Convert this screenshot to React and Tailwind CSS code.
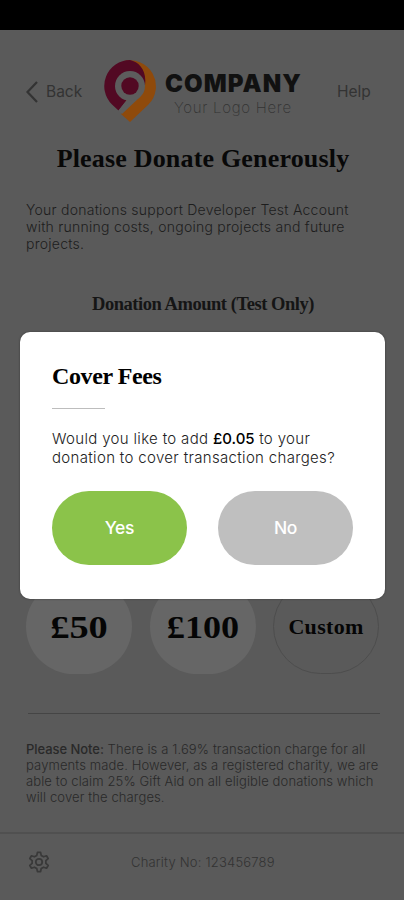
const AMOUNTS = [
    { label: '£50', style: 'bg-[#666666] text-[32px]', stretch: 'scale-x-[1.2]' },
    { label: '£100', style: 'bg-[#666666] text-[32px]', stretch: 'scale-x-[1.13]' },
    { label: 'Custom', style: 'border border-[#4d4d4d] text-[22px] tracking-[0.3px]', stretch: '' },
];

function Logo() {
    return (
        <div className="flex w-[198px] gap-[9px]">
            <svg width="52" height="62" viewBox="0 0 52 62" className="shrink-0">
                <path d="M20 1A26 26 0 0 1 44.5 44.5L26 62L17 54L26 30Z" fill="#8f4a0b" />
                <path d="M8 44.5A26 26 0 0 1 26 0C35 2 43 10 41 25L26 26L22 41L14.5 50.5Z" fill="#520923" />
                <path d="M14.5 50.5L18 54L36.5 36.5L26 36Z" fill="#5d5d5d" />
                <circle cx="26" cy="26" r="15" fill="#5d5d5d" />
                <circle cx="26" cy="26" r="8.7" fill="#520923" />
            </svg>
            <div className="flex flex-col pt-[10px]">
                <span className="text-[24px] leading-[28px] font-black tracking-[1.1px] text-[#111111]">COMPANY</span>
                <span className="pl-[9px] text-[15px] leading-[20px] font-extralight tracking-[0.7px] whitespace-nowrap text-[#333333]">
                    Your Logo Here
                </span>
            </div>
        </div>
    );
}

function BackIcon() {
    return (
        <svg width="12" height="22" viewBox="0 0 12 22" fill="none" stroke="#333333" strokeWidth="2.2" className="shrink-0">
            <path d="M11 1L1.5 11L11 21" />
        </svg>
    );
}

function GearIcon() {
    return (
        <svg width="22" height="22" viewBox="0 0 24 24" fill="none" stroke="#393939" strokeWidth="1.9" strokeLinejoin="round">
            <path d="M9.6 4.8 10.3 1.5H13.7L14.4 4.8 17 6.3 20.2 5.2 22 8.2 19.5 10.5V13.5L22 15.8 20.2 18.8 17 17.7 14.4 19.2 13.7 22.5H10.3L9.6 19.2 7 17.7 3.8 18.8 2 15.8 4.5 13.5V10.5L2 8.2 3.8 5.2 7 6.3Z" />
            <circle cx="12" cy="12" r="3.5" />
        </svg>
    );
}

function CoverFeesDialog() {
    return (
        <div className="absolute top-[332px] left-[20px] h-[267px] w-[365px] rounded-[10px] bg-white px-8 pt-[29px] shadow-[0_0_2px_#333333]">
            <h2 className="font-['Liberation_Serif',serif] text-[24px] leading-[30px] font-bold tracking-[-0.4px] whitespace-nowrap text-black">
                Cover Fees
            </h2>
            <div className="mt-[17px] h-px w-[53px] bg-[#bdbdbd]" />
            <p className="mt-[20px] text-[15px] leading-[19px] font-light tracking-[0.33px] whitespace-nowrap text-[#222222]">
                Would you like to add <span className="font-medium tracking-normal text-black">£0.05</span> to your
                <br />
                donation to cover transaction charges?
            </p>
            <div className="mt-[24px] flex gap-[31px]">
                <button className="h-[74px] w-[135px] rounded-full bg-[#8bc34a] text-[17.5px] font-medium tracking-[-0.3px] text-white">Yes</button>
                <button className="h-[74px] w-[135px] rounded-full bg-[#bfbfbf] text-[17.5px] font-medium tracking-[-0.3px] text-white">No</button>
            </div>
        </div>
    );
}

export default function App() {
    return (
        <div className="relative flex h-[900px] w-[404px] flex-col overflow-hidden bg-[#5a5a5a] font-['Inter',sans-serif]">
            <div className="h-[30px] shrink-0 bg-black" />

            <header className="flex h-[114px] shrink-0 items-start pt-[30px] pl-[26px]">
                <div className="flex w-[78px] items-center gap-2 pt-[18px] text-[#333333]">
                    <BackIcon />
                    <span className="pt-px text-[15.5px] leading-[26px]">Back</span>
                </div>
                <Logo />
                <span className="pt-[19px] pl-[35px] text-[15.5px] leading-[26px] text-[#333333]">Help</span>
            </header>

            <main className="flex h-[688px] shrink-0 flex-col px-[26px]">
                <h1 className="pl-[2px] text-center font-['Liberation_Serif',serif] text-[26px] leading-[30px] font-bold tracking-[0.18px] whitespace-nowrap text-[#080808]">
                    Please Donate Generously
                </h1>
                <p className="mt-[27px] text-[14px] leading-[17px] font-light tracking-[0.25px] whitespace-nowrap text-[#1d1d1d]">
                    Your donations support Developer Test Account
                    <br />
                    with running costs, ongoing projects and future
                    <br />
                    projects.
                </p>
                <h3 className="mt-[40px] pl-[2px] text-center font-['Liberation_Serif',serif] text-[18.5px] leading-[24px] font-bold tracking-[-0.45px] whitespace-nowrap text-[#151515]">
                    Donation Amount (Test Only)
                </h3>

                <div className="mt-[263px] flex gap-[17.5px]">
                    {AMOUNTS.map(({ label, style, stretch }) => (
                        <div
                            key={label}
                            className={`flex h-[95px] w-[106px] shrink-0 items-center justify-center rounded-full font-['Liberation_Serif',serif] font-bold text-[#050505] ${style}`}
                        >
                            <span className={stretch}>{label}</span>
                        </div>
                    ))}
                </div>

                <div className="mt-[39px] ml-[2px] h-px w-[352px] bg-[#454545]" />
                <p className="mt-[27px] text-[13px] leading-[16px] font-light tracking-[0.12px] whitespace-nowrap text-[#292929]">
                    <span className="font-medium tracking-[-0.05px]">Please Note:</span> There is a 1.69% transaction charge for all
                    <br />
                    payments made. However, as a registered charity, we are
                    <br />
                    able to claim 25% Gift Aid on all eligible donations which
                    <br />
                    will cover the charges.
                </p>
            </main>

            <footer className="flex h-[68px] shrink-0 items-center border-t-2 border-[#505050] pb-[10px] pl-[28px]">
                <GearIcon />
                <span className="ml-[81px] pt-[2px] text-[13px] font-light tracking-[0.2px] text-[#333333]">Charity No: 123456789</span>
            </footer>

            <CoverFeesDialog />
        </div>
    );
}
